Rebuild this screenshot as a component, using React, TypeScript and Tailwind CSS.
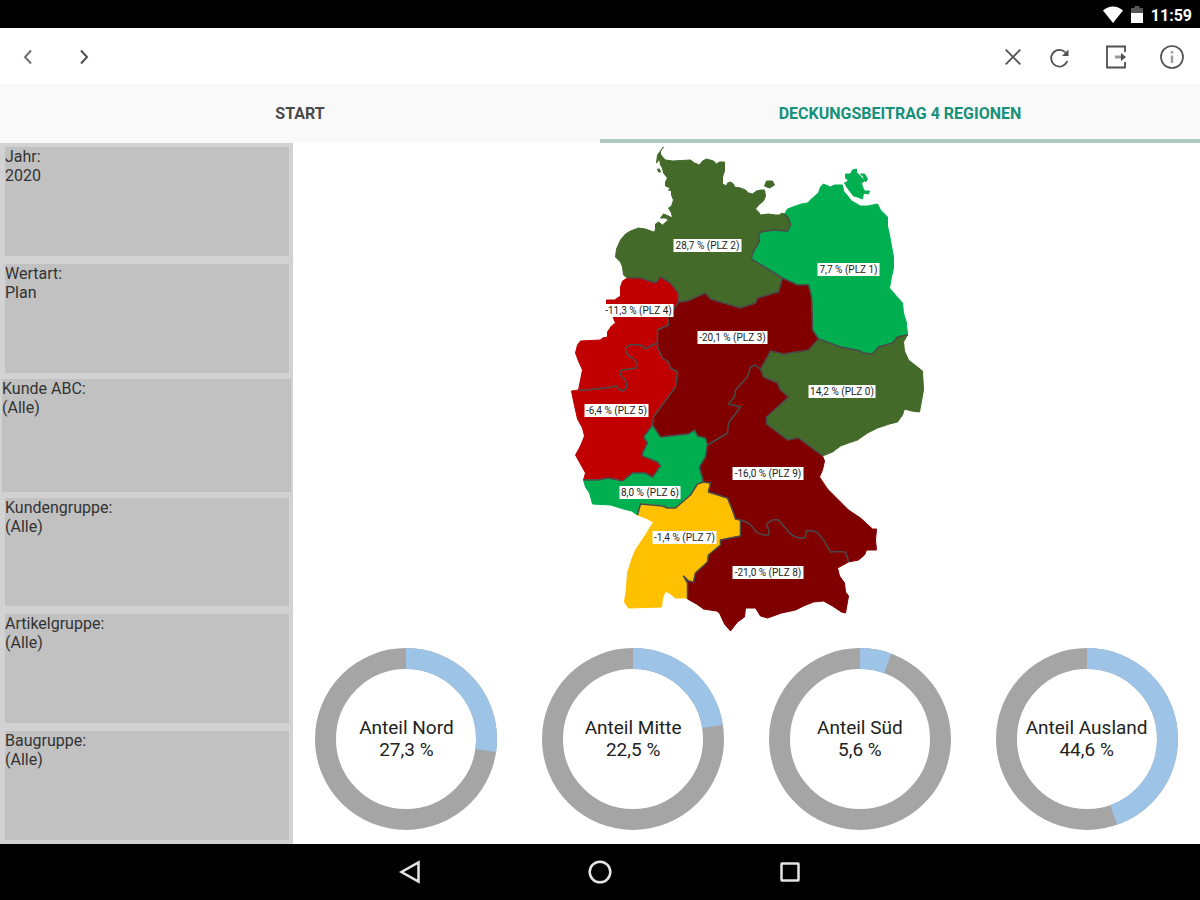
import React from "react";

interface Filter {
  label: string;
  value: string;
  active?: boolean;
}

interface Region {
  plz: number;
  color: string;
  shapes: Array<string>;
}

interface MapLabel {
  text: string;
  x: number;
  y: number;
  width: number;
}

interface DonutProps {
  label: string;
  percent: number;
}

const DARK_GREEN = "#436a29";
const GREEN = "#00b050";
const RED = "#c00000";
const DARK_RED = "#800000";
const YELLOW = "#ffc000";

const filters: Array<Filter> = [
  { label: "Jahr", value: "2020" },
  { label: "Wertart", value: "Plan" },
  { label: "Kunde ABC", value: "(Alle)", active: true },
  { label: "Kundengruppe", value: "(Alle)" },
  { label: "Artikelgruppe", value: "(Alle)" },
  { label: "Baugruppe", value: "(Alle)" },
];

const shares: Array<DonutProps> = [
  { label: "Anteil Nord", percent: 27.3 },
  { label: "Anteil Mitte", percent: 22.5 },
  { label: "Anteil Süd", percent: 5.6 },
  { label: "Anteil Ausland", percent: 44.6 },
];

const regions: Array<Region> = [
  {
    plz: 2,
    color: DARK_GREEN,
    shapes: [
      "663,147 660,151 660,154 662,157 665,160 672,161 690,160 694,163 699,165 702,161 706,159 713,161 716,164 719,162 724,162 724,171 722,177 722,184 726,186 727,183 730,182 733,184 734,187 740,188 745,190 748,193 752,194 756,191 760,190 764,190 765,196 763,201 758,205 755,209 758,212 760,215 768,214 775,215 779,215 781,213 784,214 788,218 790,225 787,231 773,230 760,232 758,236 759,241 752,253 751,259 782,278 778,292 757,298 755,303 740,308 723,303 710,299 705,293 687,301 678,302 677,292 670,283 660,277 655,283 640,278 627,278 623,275 622,267 620,262 615,257 616,249 620,240 625,234 630,231 638,228 645,229 653,232 655,230 655,224 658,222 662,225 668,220 665,218 660,218 663,214 668,216 672,218 671,213 668,208 671,206 673,200 671,195 671,191 668,190 670,188 665,186 665,182 667,178 663,173 662,168 660,165 659,159 656,163 657,155",
      "766,181 772,181 774,185 769,188 764,186",
      "657,169 659,169 660,172 658,172",
    ],
  },
  {
    plz: 1,
    color: GREEN,
    shapes: [
      "784,214 787,209 795,206 801,204 807,203 812,198 818,193 820,187 823,184 830,187 834,185 842,185 843,191 848,197 851,201 860,206 867,206 877,204 880,210 887,217 887,226 889,235 893,257 893,268 891,277 889,288 895,295 902,303 903,313 906,323 907,335 897,337 892,343 878,347 872,354 863,353 860,351 840,347 818,339 812,330 811,297 808,285 797,285 782,278 751,259 752,253 759,241 758,236 760,232 773,230 787,231 790,225 788,218",
      "852,170 856,169 856,173 859,175 861,178 865,180 861,183 862,187 864,191 869,191 868,194 863,193 862,199 857,197 853,196 850,192 847,188 844,183 848,181 845,178 845,174 850,174",
      "860,174 864,174 867,179 865,182 863,177",
    ],
  },
  {
    plz: 0,
    color: DARK_GREEN,
    shapes: [
      "818,339 840,347 860,351 863,353 872,354 878,347 892,343 897,337 907,335 903,342 904,351 908,360 922,371 923,390 921,401 919,412 911,411 904,409 902,415 897,422 889,424 877,428 867,433 857,440 848,443 840,446 832,452 822,456 798,438 787,440 766,424 766,417 788,397 780,390 777,383 763,377 760,369 770,351 783,354 808,350",
    ],
  },
  {
    plz: 3,
    color: DARK_RED,
    shapes: [
      "678,302 687,301 705,293 710,299 723,303 740,308 755,303 757,298 778,292 782,278 797,285 808,285 811,297 812,330 818,339 808,350 783,354 770,351 760,369 755,365 750,367 747,377 735,390 734,397 728,404 740,407 728,423 727,433 707,445 705,438 697,436 694,430 688,434 660,437 652,425 653,417 675,387 677,372 670,368 668,362 662,358 657,347 657,330 668,325 667,318",
    ],
  },
  {
    plz: 4,
    color: RED,
    shapes: [
      "627,278 640,278 655,283 660,277 670,283 677,292 678,302 667,318 668,325 657,330 657,343 645,349 638,345 628,345 625,352 636,362 636,368 620,371 627,387 623,391 615,386 593,389 578,390 580,380 582,370 578,361 575,353 577,345 580,341 600,340 602,338 607,337 607,332 611,326 615,323 613,318 606,304 606,300 614,300 620,296 620,287 622,281",
    ],
  },
  {
    plz: 5,
    color: RED,
    shapes: [
      "578,390 593,389 615,386 623,391 627,387 620,371 636,368 636,362 625,352 628,345 638,345 645,349 657,343 657,347 662,358 668,362 670,368 677,372 675,387 653,417 652,425 643,437 647,443 642,453 642,456 657,462 660,466 652,477 645,473 632,473 622,481 608,478 597,480 583,480 585,473 580,464 575,455 580,446 584,436 582,428 577,419 573,401 571,391",
    ],
  },
  {
    plz: 6,
    color: GREEN,
    shapes: [
      "652,425 660,437 688,434 694,430 697,436 705,438 707,445 705,457 699,467 703,482 697,484 690,495 675,508 667,508 662,506 640,504 637,515 631,511 623,509 610,505 592,504 589,493 585,487 583,480 597,480 608,478 622,481 632,473 645,473 652,477 660,466 657,462 642,456 642,453 647,443 643,437",
    ],
  },
  {
    plz: 7,
    color: YELLOW,
    shapes: [
      "637,515 640,504 662,506 667,508 675,508 690,495 697,484 703,482 710,483 708,492 727,498 732,510 735,519 740,520 740,536 720,540 720,545 708,555 707,562 695,573 693,582 688,581 683,576 687,583 687,598 675,598 670,594 665,591 662,598 661,607 628,608 624,602 626,588 627,573 631,560 635,550 645,535 653,522 645,518",
    ],
  },
  {
    plz: 9,
    color: DARK_RED,
    shapes: [
      "707,445 727,433 728,423 740,407 728,404 734,397 735,390 747,377 750,367 755,365 760,369 763,377 777,383 780,390 788,397 766,417 766,424 787,440 798,438 822,456 824,461 822,470 819,477 827,489 837,499 848,510 860,518 872,529 876,529 875,540 876,550 866,550 864,555 858,560 848,562 845,552 830,552 822,538 815,531 807,531 804,538 795,538 785,528 778,520 772,520 767,524 768,535 760,535 752,527 740,520 735,519 732,510 727,498 708,492 710,483 703,482 699,467 705,457",
    ],
  },
  {
    plz: 8,
    color: DARK_RED,
    shapes: [
      "740,520 752,527 760,535 768,535 767,524 772,520 778,520 785,528 795,538 804,538 807,531 815,531 822,538 830,552 845,552 848,562 837,568 839,576 844,583 845,592 848,596 845,613 841,612 832,606 823,601 813,602 803,606 795,610 781,613 767,618 760,616 755,608 745,608 744,617 737,622 730,631 724,624 719,613 716,611 703,609 696,604 687,599 687,583 683,576 688,581 693,582 695,573 707,562 708,555 720,545 720,540 740,536",
    ],
  },
];

// inner borders only, the coast stays without a line
const borders: Array<string> = [
  "784,214 788,218 790,225 787,231 773,230 760,232 758,236 759,241 752,253 751,259 782,278",
  "627,278 640,278 655,283 660,277 670,283 677,292 678,302 687,301 705,293 710,299 723,303 740,308 755,303 757,298 778,292 782,278 797,285 808,285 811,297 812,330 818,339",
  "907,335 897,337 892,343 878,347 872,354 863,353 860,351 840,347 818,339 808,350 783,354 770,351 760,369",
  "760,369 763,377 777,383 780,390 788,397 766,417 766,424 787,440 798,438 822,456",
  "760,369 755,365 750,367 747,377 735,390 734,397 728,404 740,407 728,423 727,433 707,445",
  "678,302 667,318 668,325 657,330 657,347 662,358 668,362 670,368 677,372 675,387 653,417 652,425 660,437 688,434 694,430 697,436 705,438 707,445 705,457 699,467 703,482",
  "652,425 643,437 647,443 642,453 642,456 657,462 660,466 652,477 645,473 632,473 622,481 608,478 597,480 583,480",
  "637,515 640,504 662,506 667,508 675,508 690,495 697,484 703,482 710,483 708,492 727,498 732,510 735,519 740,520",
  "740,520 740,536 720,540 720,545 708,555 707,562 695,573 693,582 688,581 683,576 687,583 687,598",
];

// borders between two regions of the same colour, drawn as smooth curves
const softBorders: Array<string> = [
  "M657 343Q651 345 645 349 642 344 636 345 628 343 625 349 625 355 632 358 639 364 636 368 630 369 621 370 617 374 624 379 629 386 623 391 619 391 616 386 604 389 593 389 585 391 578 390",
  "M740 520Q748 522 752 527 757 536 768 535 770 531 766 525 769 519 778 520 781 524 785 528 792 539 804 538 806 535 806 531 811 530 816 532 823 538 830 552 838 551 845 552 847 557 848 562",
];

const mapLabels: Array<MapLabel> = [
  { text: "28,7 % (PLZ 2)", x: 673, y: 239, width: 68 },
  { text: "7,7 % (PLZ 1)", x: 817, y: 263, width: 62 },
  { text: "-11,3 % (PLZ 4)", x: 603, y: 304, width: 70 },
  { text: "-20,1 % (PLZ 3)", x: 697, y: 331, width: 70 },
  { text: "14,2 % (PLZ 0)", x: 808, y: 385, width: 67 },
  { text: "-6,4 % (PLZ 5)", x: 584, y: 404, width: 64 },
  { text: "-16,0 % (PLZ 9)", x: 732, y: 467, width: 71 },
  { text: "8,0 % (PLZ 6)", x: 619, y: 486, width: 61 },
  { text: "-1,4 % (PLZ 7)", x: 652, y: 531, width: 64 },
  { text: "-21,0 % (PLZ 8)", x: 732, y: 566, width: 71 },
];

function StatusBar() {
  return (
    <div className="flex h-7 shrink-0 items-center justify-end bg-black pr-2 text-white">
      <svg className="mr-2 h-5 w-5" viewBox="0 0 20 20" fill="currentColor">
        <path d="M10 19 0 6.500C6 1 14 1 20 6.500z" />
      </svg>
      <svg className="mr-2 h-5 w-3" viewBox="0 0 12 20">
        <path d="M0 4h3.500V2h5v2H12v6H0z" fill="#555" />
        <path d="M0 9h12v10H0z" fill="#fff" />
      </svg>
      <span className="pt-1 text-base font-bold">11:59</span>
    </div>
  );
}

function Toolbar() {
  return (
    <header className="flex h-14 shrink-0 items-center bg-white pt-px text-[#505050]">
      <button aria-label="Zurück" className="flex h-full w-14 items-center justify-center">
        <svg className="h-4 w-4" viewBox="0 0 16 16" fill="none" stroke="#707070" strokeWidth="2">
          <path d="M11 1.500 5 8l6 6.500" />
        </svg>
      </button>
      <button aria-label="Vor" className="flex h-full w-14 items-center justify-center">
        <svg className="h-4 w-4" viewBox="0 0 16 16" fill="none" stroke="currentColor" strokeWidth="2">
          <path d="M5 1.500 11 8l-6 6.500" />
        </svg>
      </button>
      <div className="flex-1"></div>
      <button aria-label="Schließen" className="flex h-full w-[38px] items-center justify-center">
        <svg className="h-4 w-4" viewBox="0 0 16 16" fill="none" stroke="currentColor" strokeWidth="1.700">
          <path d="M.7.7l14.600 14.600M15.300.7.7 15.300" />
        </svg>
      </button>
      <button aria-label="Aktualisieren" className="flex h-full w-14 items-center justify-center">
        <svg className="h-6 w-6" viewBox="0 0 24 24" fill="none" stroke="currentColor" strokeWidth="1.800">
          <path d="M17.500 7.500A8.300 8.300 0 1 0 19.300 16" />
          <path d="M20.500 4.500v6.500H14z" fill="currentColor" stroke="none" />
        </svg>
      </button>
      <button aria-label="Abmelden" className="flex h-full w-14 items-center justify-center">
        <svg className="h-6 w-6" viewBox="0 0 24 24" fill="none" stroke="currentColor" strokeWidth="1.800">
          <path d="M21 7V1.500H3v21h18V17" />
          <path d="M11 12h7" stroke="#9a9a9a" strokeWidth="3" />
          <path d="M17 8l5 4-5 4z" fill="currentColor" stroke="none" />
        </svg>
      </button>
      <button aria-label="Info" className="flex h-full w-14 items-center justify-center">
        <svg className="h-6 w-6" viewBox="0 0 24 24" fill="none" stroke="currentColor" strokeWidth="1.700">
          <circle cx="12" cy="12" r="11" />
          <path d="M12 6v2.500M12 10.500V18" stroke="#a0a0a0" strokeWidth="2.500" />
        </svg>
      </button>
    </header>
  );
}

function Tabs() {
  return (
    <div role="tablist" className="grid h-[59px] shrink-0 grid-cols-2 bg-[#f9f9f9] text-base font-bold">
      <button role="tab" aria-selected="false" className="border-b-4 border-transparent pt-1 text-[#4a4a4a]">
        START
      </button>
      <button role="tab" aria-selected="true" className="border-b-4 border-[#accabf] pt-1 text-[#16917a]">
        DECKUNGSBEITRAG 4 REGIONEN
      </button>
    </div>
  );
}

function FilterCard({ label, value, active = false }: Filter) {
  return (
    <div className={active ? "grid p-[2px]" : "grid py-1 pr-1 pl-[5px]"}>
      <button className="flex flex-col items-start bg-[#c1c1c1] text-left text-base leading-[19px] text-[#333]">
        <span>{label}:</span>
        <span>{value}</span>
      </button>
    </div>
  );
}

function GermanyMap() {
  return (
    <svg className="min-h-0 w-full flex-1" viewBox="566 143 360 505" role="img" aria-label="Deckungsbeitrag nach Regionen">
      {regions.map((region) => (
        <g key={region.plz} fill={region.color} stroke={region.color} strokeWidth="1" strokeLinejoin="round">
          {region.shapes.map((points) => (
            <polygon key={points} points={points} />
          ))}
        </g>
      ))}
      <g fill="none" stroke="#4a4a4a" strokeWidth="1.500" strokeLinejoin="round">
        {borders.map((points) => (
          <polyline key={points} points={points} />
        ))}
        {softBorders.map((d) => (
          <path key={d} d={d} />
        ))}
      </g>
      {mapLabels.map(({ text, x, y, width }) => (
        <g key={text}>
          <rect x={x} y={y} width={width} height="13" fill="#fff" />
          <text x={x + width / 2} y={y + 10} textAnchor="middle" fill="#222" className="text-[10px]">
            {text}
          </text>
        </g>
      ))}
    </svg>
  );
}

function Donut({ label, percent }: DonutProps) {
  return (
    <div className="relative mx-auto h-[182px] w-[182px]">
      <svg className="h-full w-full -rotate-90" viewBox="0 0 182 182" fill="none" strokeWidth="21">
        <circle cx="91" cy="91" r="80.500" stroke="#a5a5a5" />
        <circle cx="91" cy="91" r="80.500" stroke="#9dc3e6" pathLength="100" strokeDasharray={`${percent} 100`} />
      </svg>
      <div className="absolute inset-0 flex flex-col items-center justify-center text-[19px] leading-[22px] text-[#222]">
        <span>{label}</span>
        <span>{percent.toLocaleString("de-DE")} %</span>
      </div>
    </div>
  );
}

function NavigationBar() {
  return (
    <nav className="flex h-14 shrink-0 justify-center bg-black text-[#e4e4e4]">
      <button aria-label="Zurück" className="flex w-[190px] items-center justify-center">
        <svg className="h-6 w-6" viewBox="0 0 24 24" fill="none" stroke="currentColor" strokeWidth="2.500">
          <path d="M20.500 2.500v19L3.500 12z" />
        </svg>
      </button>
      <button aria-label="Startbildschirm" className="flex w-[190px] items-center justify-center">
        <svg className="h-6 w-6" viewBox="0 0 24 24" fill="none" stroke="currentColor" strokeWidth="2.500">
          <circle cx="12" cy="12" r="10.300" />
        </svg>
      </button>
      <button aria-label="Übersicht" className="flex w-[190px] items-center justify-center">
        <svg className="h-6 w-6" viewBox="0 0 24 24" fill="none" stroke="currentColor" strokeWidth="2.500">
          <rect x="3.500" y="3.500" width="17" height="17" rx="0.500" />
        </svg>
      </button>
    </nav>
  );
}

export default function App() {
  return (
    <div className="flex h-screen flex-col bg-white font-[Roboto,sans-serif]">
      <StatusBar />
      <Toolbar />
      <Tabs />
      <main className="flex min-h-0 flex-1">
        <aside className="grid w-[293px] shrink-0 grid-rows-6 bg-[#d2d2d2]">
          {filters.map((filter) => (
            <FilterCard key={filter.label} {...filter} />
          ))}
        </aside>
        <section className="flex min-w-0 flex-1 flex-col">
          <GermanyMap />
          <div className="grid shrink-0 grid-cols-4 pb-[14px]">
            {shares.map((share) => (
              <Donut key={share.label} {...share} />
            ))}
          </div>
        </section>
      </main>
      <NavigationBar />
    </div>
  );
}
